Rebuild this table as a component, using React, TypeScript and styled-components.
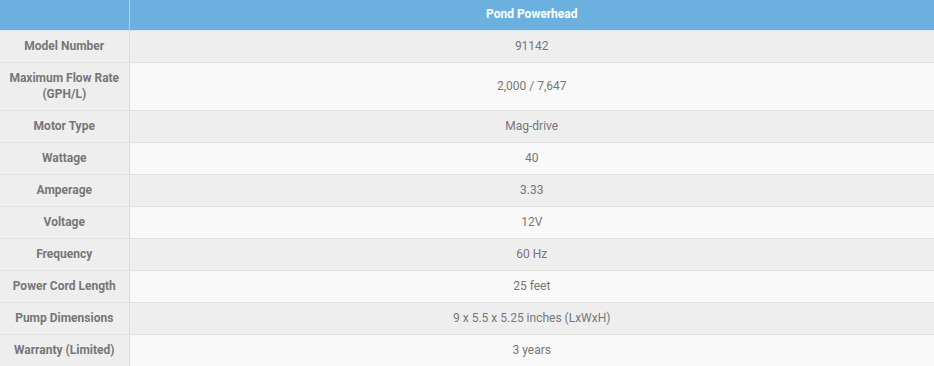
import styled, { createGlobalStyle } from "styled-components";

const GlobalStyle = createGlobalStyle`
  body {
    margin: 0;
    background: #ffffff;
    font-family: Roboto, "Liberation Sans", Arial, sans-serif;
  }
`;

const Table = styled.table`
  width: 934px;
  border-collapse: collapse;
  table-layout: fixed;
  font-size: 12px;
  line-height: 16px;
`;

const HeadCell = styled.th`
  background: #6bb0df;
  color: #ffffff;
  font-weight: 700;
  text-align: center;
  padding: 6px 8px 8px;
  border-bottom: 1px solid #d6e6f2;
  border-right: 1px solid #a9d0ec;

  &:last-child {
    border-right: none;
  }
`;

const Label = styled.th`
  background: #eeeeee;
  color: #777777;
  font-weight: 700;
  text-align: center;
  padding: 7px 8px 8px;
  border-bottom: 1px solid #e0e0e0;
  border-right: 1px solid #dcdcdc;
`;

const Value = styled.td<{ $odd: boolean }>`
  background: ${(p) => (p.$odd ? "#eeeeee" : "#f9f9f9")};
  color: #777777;
  text-align: center;
  padding: 7px 8px 8px;
  border-bottom: 1px solid #e0e0e0;
`;

const specs: [string, string][] = [
  ["Model Number", "91142"],
  ["Maximum Flow Rate (GPH/L)", "2,000 / 7,647"],
  ["Motor Type", "Mag-drive"],
  ["Wattage", "40"],
  ["Amperage", "3.33"],
  ["Voltage", "12V"],
  ["Frequency", "60 Hz"],
  ["Power Cord Length", "25 feet"],
  ["Pump Dimensions", "9 x 5.5 x 5.25 inches (LxWxH)"],
  ["Warranty (Limited)", "3 years"],
];

const App = () => {
  return (
    <>
      <GlobalStyle />
      <Table>
        <colgroup>
          <col style={{ width: 129 }} />
          <col />
        </colgroup>
        <thead>
          <tr>
            <HeadCell />
            <HeadCell>Pond Powerhead</HeadCell>
          </tr>
        </thead>
        <tbody>
          {specs.map(([label, value], i) => (
            <tr key={label}>
              <Label>{label}</Label>
              <Value $odd={i % 2 === 0}>{value}</Value>
            </tr>
          ))}
        </tbody>
      </Table>
    </>
  );
};

export default App;
